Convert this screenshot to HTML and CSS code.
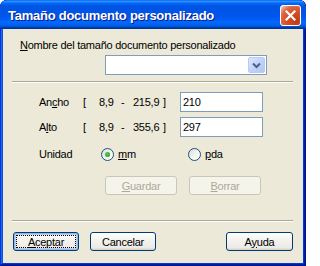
FILE: index.html
```html
<!DOCTYPE html>
<html>
<head>
<meta charset="utf-8">
<link rel="stylesheet" href="styles.css">
</head>
<body>
<div class="window">
  <div class="titlebar">
    <span class="title">Tamaño documento personalizado</span>
    <span class="close" aria-label="Cerrar">
      <svg width="11" height="11" viewBox="0 0 11 11"><path d="M1.5 1.5 L9.5 9.5 M9.5 1.5 L1.5 9.5" stroke="#fff" stroke-width="2.2" stroke-linecap="square"/></svg>
    </span>
  </div>
  <div class="content">
    <div class="name-label"><u>N</u>ombre del tamaño documento personalizado</div>
    <div class="combo">
      <span class="combo-btn">
        <svg width="9" height="7" viewBox="0 0 9 7"><path d="M1 1.5 L4.5 5 L8 1.5" fill="none" stroke="#4D6185" stroke-width="2"/></svg>
      </span>
    </div>
    <div class="sep"></div>
    <div class="dim-row first">
      <span class="dim-label">An<u>c</u>ho</span>
      <span class="br">[</span><span class="lo">8,9</span><span class="dash">-</span><span class="hi">215,9</span><span class="br2">]</span>
      <span class="field">210</span>
    </div>
    <div class="dim-row">
      <span class="dim-label">A<u>l</u>to</span>
      <span class="br">[</span><span class="lo">8,9</span><span class="dash">-</span><span class="hi">355,6</span><span class="br2">]</span>
      <span class="field">297</span>
    </div>
    <div class="unit-row">
      <span class="unit-label">Unidad</span>
      <span class="radio-item mm"><span class="radio checked"></span><span><u>m</u>m</span></span>
      <span class="radio-item"><span class="radio"></span><span><u>p</u>da</span></span>
    </div>
    <div class="save-row">
      <span class="btn disabled"><u>G</u>uardar</span>
      <span class="btn disabled"><u>B</u>orrar</span>
    </div>
    <div class="sep bottom"></div>
    <div class="actions">
      <span class="btn default"><u>A</u>ceptar</span>
      <span class="btn">Cancelar</span>
      <span class="btn help">A<u>y</u>uda</span>
    </div>
  </div>
</div>
</body>
</html>
```
FILE: styles.css
```css
html, body {
  margin: 0;
  padding: 0;
  background: #ffffff;
}
.window {
  width: 306px;
  height: 266px;
  box-sizing: border-box;
  border-radius: 7px 7px 0 0;
  overflow: hidden;
  background: #0831D9;
  box-shadow: inset -1px -1px #00138C, inset 1px 1px #0831D9, inset -2px -2px #001EA0, inset 2px 2px #166AEE, inset -3px -3px #003BDA, inset 3px 3px #0855DD;
  display: flex;
  flex-direction: column;
  font-family: "Liberation Sans", Arial, sans-serif;
  font-size: 11px;
  letter-spacing: -0.25px;
  color: #000;
}
.titlebar {
  height: 29px;
  flex: none;
  display: flex;
  align-items: center;
  padding: 0 5px 0 8px;
  background: linear-gradient(180deg, #0058EE 0%, #3593FF 4%, #288EFF 6%, #127DFF 8%, #036FFC 10%, #0262EE 14%, #0057E5 20%, #0054E3 24%, #0055EB 56%, #005BF5 66%, #026AFE 76%, #0062EF 86%, #0052D6 92%, #0040AB 94%, #003092 100%);
  border-radius: 7px 7px 0 0;
}
.title {
  flex: 1;
  color: #fff;
  font-family: "Liberation Sans", Arial, sans-serif;
  font-weight: bold;
  font-size: 13px;
  letter-spacing: -0.25px;
  text-shadow: 1px 1px #0A1883;
  padding-top: 1px;
}
.close {
  width: 21px;
  height: 21px;
  box-sizing: border-box;
  border: 1px solid #fff;
  border-radius: 3px;
  background: radial-gradient(circle at 80% 80%, #C03A14 0%, #D9522B 50%, #DC6A47 72%, #F2B7A2 92%, #ffffff 100%);
  display: flex;
  align-items: center;
  justify-content: center;
  margin-top: 2px;
}
.content {
  flex: 1;
  margin: 0 3px 3px 3px;
  background: #ECE9D8;
  display: flex;
  flex-direction: column;
}
.name-label {
  margin: 10px 0 0 17px;
  height: 13px;
  line-height: 13px;
}
.combo {
  margin: 3px 0 0 102px;
  width: 162px;
  height: 20px;
  box-sizing: border-box;
  border: 1px solid #7F9DB9;
  background: #fff;
  display: flex;
  justify-content: flex-end;
  padding: 1px;
}
.combo-btn {
  width: 17px;
  height: 16px;
  box-sizing: border-box;
  border: 1px solid #B9CBF3;
  border-radius: 2px;
  background: linear-gradient(135deg, #DCE6FD 0%, #C1D3FB 50%, #B1C6F8 100%);
  display: flex;
  align-items: center;
  justify-content: center;
}
.sep {
  margin: 6px 0 0 9px;
  width: 281px;
  height: 1px;
  background: #ACA899;
  border-bottom: 1px solid #fff;
}
.sep.bottom {
  margin-top: 25px;
}
.dim-row {
  display: flex;
  align-items: center;
  height: 20px;
  margin-top: 5px;
  padding-left: 36px;
}
.dim-row.first {
  margin-top: 9px;
}
.dim-label { width: 44px; }
.br { width: 16px; }
.lo { width: 22px; }
.dash { width: 12px; }
.hi { width: 30px; }
.br2 { width: 17px; }
.field {
  width: 83px;
  height: 20px;
  box-sizing: border-box;
  border: 1px solid #7F9DB9;
  background: #fff;
  padding-left: 2px;
  display: flex;
  align-items: center;
}
.unit-row {
  display: flex;
  align-items: center;
  height: 20px;
  margin-top: 7px;
  padding-left: 36px;
}
.unit-label { width: 62px; }
.radio-item {
  display: flex;
  align-items: center;
  gap: 4px;
}
.radio-item.mm { width: 87px; }
.radio {
  width: 13px;
  height: 13px;
  box-sizing: border-box;
  border-radius: 50%;
  border: 1px solid #1C5180;
  background: linear-gradient(135deg, #DCDCD7 0%, #F4F4F1 55%, #ffffff 100%);
  display: flex;
  align-items: center;
  justify-content: center;
}
.radio.checked::after {
  content: "";
  width: 5px;
  height: 5px;
  border-radius: 50%;
  background: radial-gradient(circle at 40% 40%, #55D551 0%, #2FA92C 60%, #1B8C18 100%);
}
.save-row {
  display: flex;
  gap: 12px;
  margin: 12px 0 0 102px;
}
.btn {
  height: 19px;
  box-sizing: border-box;
  border: 1px solid #003C74;
  border-radius: 3px;
  background: linear-gradient(180deg, #ffffff 0%, #F4F3EE 40%, #ECEBE6 85%, #D6D0C5 100%);
  display: flex;
  align-items: center;
  justify-content: center;
  width: 66px;
}
.save-row .btn { width: 72px; }
.btn.disabled {
  border-color: #C9C7BA;
  background: #F5F4EA;
  color: #ACA899;
}
.actions {
  display: flex;
  gap: 11px;
  margin: 10px 10px 0 10px;
}
.btn.default {
  box-shadow: inset 0 0 0 1px #98B8EA, inset 0 0 0 2px #BCD0F4;
  outline: 1px dotted #000;
  outline-offset: -4px;
}
.btn.help {
  margin-left: auto;
  width: 67px;
}
u { text-decoration: underline; text-underline-offset: 1px; }
```
